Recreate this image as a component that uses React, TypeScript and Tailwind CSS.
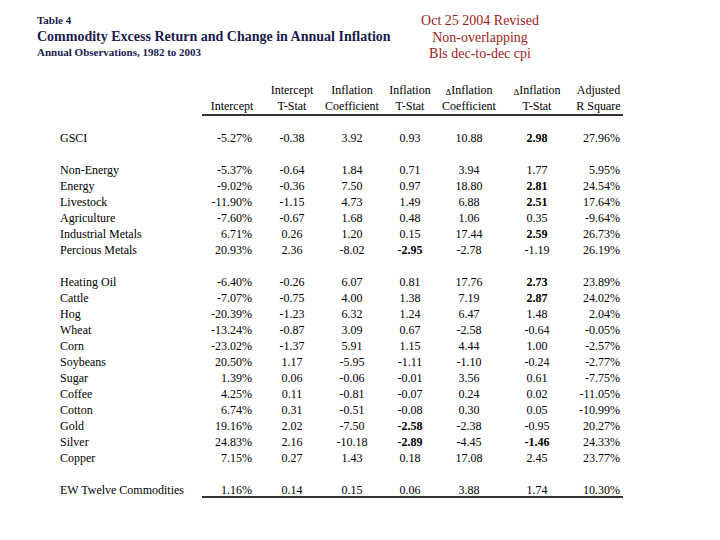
import React from 'react';

// Table 4: commodity excess returns vs. change in annual inflation

type Row = { name: string; v: string[]; bold?: number[] } | null;

const rows: Row[] = [
  { name: 'GSCI', v: ['-5.27%', '-0.38', '3.92', '0.93', '10.88', '2.98', '27.96%'], bold: [5] },
  null,
  { name: 'Non-Energy', v: ['-5.37%', '-0.64', '1.84', '0.71', '3.94', '1.77', '5.95%'] },
  { name: 'Energy', v: ['-9.02%', '-0.36', '7.50', '0.97', '18.80', '2.81', '24.54%'], bold: [5] },
  { name: 'Livestock', v: ['-11.90%', '-1.15', '4.73', '1.49', '6.88', '2.51', '17.64%'], bold: [5] },
  { name: 'Agriculture', v: ['-7.60%', '-0.67', '1.68', '0.48', '1.06', '0.35', '-9.64%'] },
  { name: 'Industrial Metals', v: ['6.71%', '0.26', '1.20', '0.15', '17.44', '2.59', '26.73%'], bold: [5] },
  { name: 'Percious Metals', v: ['20.93%', '2.36', '-8.02', '-2.95', '-2.78', '-1.19', '26.19%'], bold: [3] },
  null,
  { name: 'Heating Oil', v: ['-6.40%', '-0.26', '6.07', '0.81', '17.76', '2.73', '23.89%'], bold: [5] },
  { name: 'Cattle', v: ['-7.07%', '-0.75', '4.00', '1.38', '7.19', '2.87', '24.02%'], bold: [5] },
  { name: 'Hog', v: ['-20.39%', '-1.23', '6.32', '1.24', '6.47', '1.48', '2.04%'] },
  { name: 'Wheat', v: ['-13.24%', '-0.87', '3.09', '0.67', '-2.58', '-0.64', '-0.05%'] },
  { name: 'Corn', v: ['-23.02%', '-1.37', '5.91', '1.15', '4.44', '1.00', '-2.57%'] },
  { name: 'Soybeans', v: ['20.50%', '1.17', '-5.95', '-1.11', '-1.10', '-0.24', '-2.77%'] },
  { name: 'Sugar', v: ['1.39%', '0.06', '-0.06', '-0.01', '3.56', '0.61', '-7.75%'] },
  { name: 'Coffee', v: ['4.25%', '0.11', '-0.81', '-0.07', '0.24', '0.02', '-11.05%'] },
  { name: 'Cotton', v: ['6.74%', '0.31', '-0.51', '-0.08', '0.30', '0.05', '-10.99%'] },
  { name: 'Gold', v: ['19.16%', '2.02', '-7.50', '-2.58', '-2.38', '-0.95', '20.27%'], bold: [3] },
  { name: 'Silver', v: ['24.83%', '2.16', '-10.18', '-2.89', '-4.45', '-1.46', '24.33%'], bold: [3, 5] },
  { name: 'Copper', v: ['7.15%', '0.27', '1.43', '0.18', '17.08', '2.45', '23.77%'] },
  null,
];

// label col + 7 data columns
const grid = 'grid grid-cols-[142px_60px_60px_60px_56px_62px_74px_49px]';
const cellAlign = ['text-right pr-[10px]', 'text-center', 'text-center', 'text-center', 'text-center', 'text-center', 'text-right pr-[3px]'];

const Delta = () => <span className="text-[9px] align-[-1px]">Δ</span>;

const headers: [React.ReactNode, React.ReactNode][] = [
  ['', 'Intercept'],
  ['Intercept', 'T-Stat'],
  ['Inflation', 'Coefficient'],
  ['Inflation', 'T-Stat'],
  [<><Delta />Inflation</>, 'Coefficient'],
  [<><Delta />Inflation</>, 'T-Stat'],
  ['Adjusted', 'R Square'],
];

export default function App() {
  return (
    <div className="w-[720px] h-[540px] bg-white text-black font-['Liberation_Serif',serif] overflow-hidden">
      {/* title block */}
      <div className="flex pt-[12px]">
        <div className="ml-[37px] w-[383px] font-bold text-[#1b1b4d]">
          <div className="text-[11px] leading-[15px] pt-[1px]">Table 4</div>
          <div className="text-[14px] leading-[17px]">Commodity Excess Return and Change in Annual Inflation</div>
          <div className="text-[11px] leading-[15px]">Annual Observations, 1982 to 2003</div>
        </div>
        <div className="w-[120px] text-center text-[14px] leading-[16.5px] text-[#a11a1a] mt-[1px]">
          <div>Oct 25 2004 Revised</div>
          <div>Non-overlapping</div>
          <div>Bls dec-to-dec cpi</div>
        </div>
      </div>

      {/* table */}
      <div className="ml-[60px] mt-[19px] text-[12px] leading-[16px]">
        <div className={grid}>
          <div />
          {headers.map((h, i) => (
            <div key={i} className="text-center border-b-2 border-[#333]">
              <div className="h-[16px]">{h[0]}</div>
              <div className="h-[16px]">{h[1]}</div>
            </div>
          ))}
        </div>
        <div className="h-[14px]" />
        {rows.map((r, i) =>
          r ? (
            <div key={i} className={grid}>
              <div className="h-[16px] whitespace-nowrap">{r.name}</div>
              {r.v.map((v, j) => (
                <div key={j} className={`h-[16px] ${cellAlign[j]} ${r.bold?.includes(j) ? 'font-bold' : ''}`}>
                  {v}
                </div>
              ))}
            </div>
          ) : (
            <div key={i} className="h-[16px]" />
          )
        )}
        <div className={grid}>
          <div className="h-[16px] whitespace-nowrap">EW Twelve Commodities</div>
          {['1.16%', '0.14', '0.15', '0.06', '3.88', '1.74', '10.30%'].map((v, j) => (
            <div key={j} className={`h-[16px] border-b-2 border-[#333] ${cellAlign[j]}`}>
              {v}
            </div>
          ))}
        </div>
      </div>
    </div>
  );
}
